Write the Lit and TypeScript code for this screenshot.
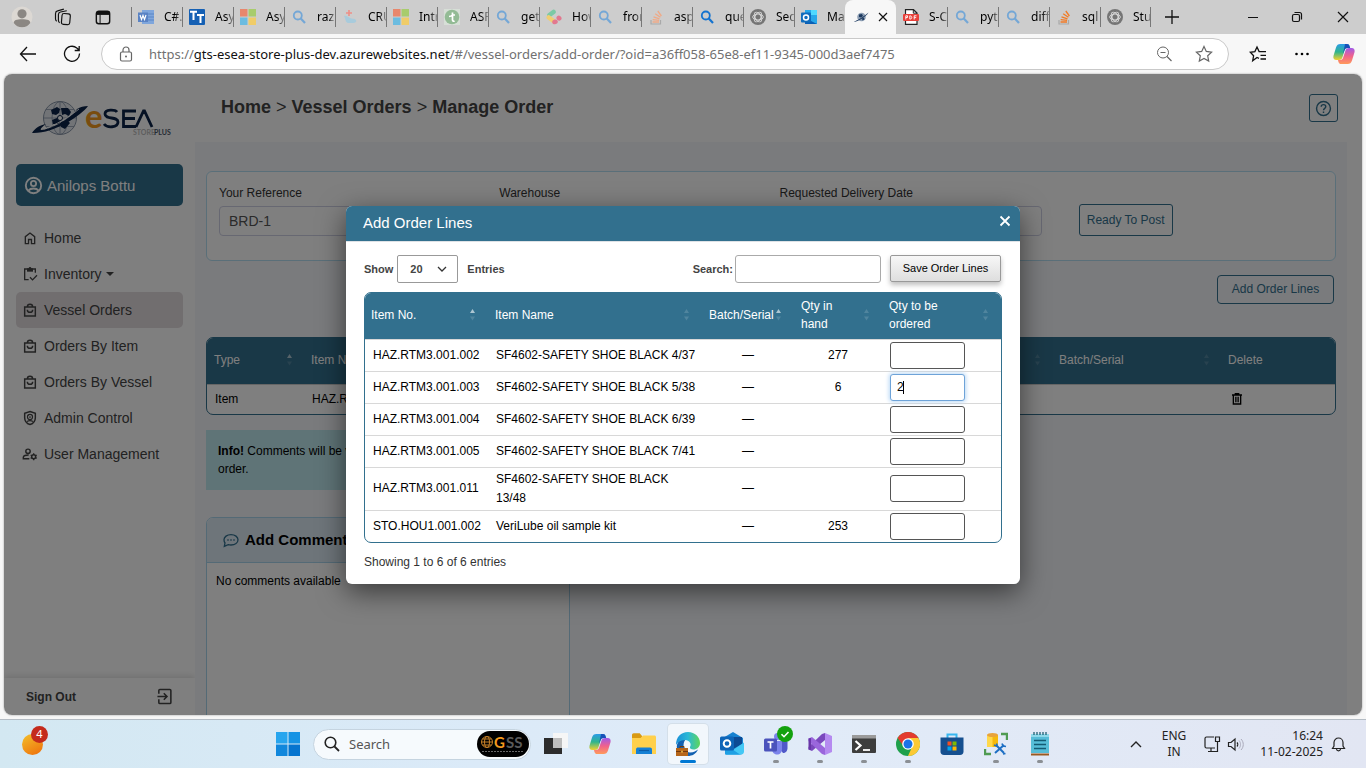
import { LitElement, html, css, svg, nothing, TemplateResult } from "lit";
import { customElement, state } from "lit/decorators.js";
import { classMap } from "lit/directives/class-map.js";

const icon = (size: number, body: TemplateResult, box = 24) =>
  html`<svg width=${size} height=${size} viewBox="0 0 ${box} ${box}" aria-hidden="true">${body}</svg>`;

/* ---------- favicons (16 box) ---------- */
const lens = (c: string) => svg`<circle cx="6.8" cy="6.5" r="4" fill="none" stroke=${c} stroke-width="1.8"/><path d="M9.8 9.6 14 14" stroke=${c} stroke-width="2.2"/>`;
const stack = (c: string) => svg`<path d="M3 11v4h9.500v-4" fill="none" stroke="#a9a9a9" stroke-width="1.200"/><path d="M4.500 13h6.500M4.700 10.600l6.400.8M5.500 7.800l6 2M7.200 4.700l5.200 3.600M9.800 2l3.600 5" stroke=${c} stroke-width="1.300"/>`;
const favs: Record<string, TemplateResult> = {
  word: svg`<rect x="4" y="1" width="12" height="14" fill="#7fa6dc"/><path d="M4 5h12M4 8h12M4 11h12" stroke="#5b86c6"/><rect y="3.500" width="10" height="9.500" fill="#5a83c4"/><path d="m2 6 1.500 4.500L5 6.500l1.500 4L8 6" fill="none" stroke="#fff" stroke-width="1.200"/>`,
  tt: svg`<rect width="16" height="16" rx="1" fill="#1560b4"/><path d="M1 2.800h7M4.500 3v8M8 6h7M11.500 6v8" stroke="#fff" stroke-width="2"/>`,
  ms: svg`<path fill="#e8876c" d="M0 0h7.500v7.500H0z"/><path fill="#a8cc6c" d="M8.500 0H16v7.500H8.500z"/><path fill="#6cbce0" d="M0 8.500h7.500V16H0z"/><path fill="#f0cc68" d="M8.500 8.500H16V16H8.500z"/>`,
  find: lens("#74a7d6"),
  findb: lens("#1473cf"),
  crud: svg`<path d="M7 1v6M4 4h6" stroke="#ef8f86" stroke-width="1.600"/><path d="M2 7c2-1 4 1 6 2s4 0 6 2c1 2-1 3-3 3H6C3 13 4 10 2 7z" fill="#a8cbdc"/>`,
  tt2: svg`<rect width="16" height="16" fill="#d7dfd7"/><circle cx="8" cy="8" r="7.300" fill="#93bb95"/><path d="M8.500 3.500v7.500c0 1.300 1.500 1.500 2 .8M5 7.500c2 0 3-1 3.500-1.500H11" fill="none" stroke="#fff" stroke-width="1.700"/>`,
  pills: svg`<g stroke-width="4.600" stroke-linecap="round"><path d="m3.500 6 4-3" stroke="#7cc9a5"/><path d="m2.800 8.500 4 3" stroke="#f0ce73"/><path d="m8.500 13 1-.2M12.800 9l.4.400" stroke="#e2788f"/></g>`,
  so: stack("#f0a986"),
  so2: stack("#f27a24"),
  ai: svg`<circle cx="8" cy="8" r="8" fill="#757575"/><g fill="none" stroke="#d8d8d8" stroke-width="1"><ellipse cx="8" cy="8" rx="5.300" ry="3"/><ellipse cx="8" cy="8" rx="5.300" ry="3" transform="rotate(60 8 8)"/><ellipse cx="8" cy="8" rx="5.300" ry="3" transform="rotate(120 8 8)"/></g>`,
  outlook: svg`<rect x="4" y="1" width="12" height="14" fill="#28a8ea"/><path d="M10 1h6v5h-6z" fill="#50d9ff"/><path d="m4 9 12 6H4z" fill="#0a5fb5"/><rect y="3.500" width="10" height="10" rx="1" fill="#0f6cbd"/><circle cx="5" cy="8.500" r="2.500" fill="none" stroke="#fff" stroke-width="1.500"/>`,
  pdf: svg`<path d="M2.500.7h8L14 4v11.300H2.500z" fill="#fff" stroke="#222" stroke-width="1.200"/><path d="M10.300.7v3.500H14" fill="none" stroke="#222"/><rect y="5" width="16" height="7" rx="1" fill="#e8403a"/><path d="M2.800 10.500V6.800h1.700v1.700H2.800M6.800 6.800v3.300c2.800 0 2.500-3.300 0-3.300M11.200 10.500V6.800h2.300M11.200 8.600h2" fill="none" stroke="#fff" stroke-width=".9"/>`,
  sea: svg`<circle cx="8.500" cy="8" r="4.300" fill="#8fa0b5"/><path d="M6 5.500 9 5l1 2-2 1.500-2-.5zM9 9.500l2-1 .5 2-2 1z" fill="#1d3a60"/><path d="M.5 13C3 12 12 7 15.500 3.500 13 8 5 12.500.5 13z" fill="#1d3a60"/>`,
};

/* ---------- navigation icons (24 box) ---------- */
const bag = svg`<path d="M4 7.500h16v13.500H4zM8 7.500a4 4 0 0 1 8 0M8 11.500a4 4 0 0 0 8 0" fill="none" stroke="currentColor" stroke-width="2.200"/>`;
const navIcons: Record<string, TemplateResult> = {
  home: svg`<path d="M5 20.500V10l7-5.500 7 5.500v10.500h-4.800v-6.300H9.800v6.300z" fill="none" stroke="currentColor" stroke-width="2"/>`,
  inventory: svg`<path d="M10 20.500H4V4.500h16V10" fill="none" stroke="currentColor" stroke-width="2"/><path d="M7.500 3.500h9v5h-9z" fill="currentColor"/><circle cx="12" cy="3.500" r="2" fill="currentColor"/><path d="m12 17 3.800 3.800L22.500 14" fill="none" stroke="currentColor" stroke-width="2"/>`,
  bag,
  shield: svg`<path d="M12 2.200 20 5v6.500c0 4.800-3.400 8.800-8 10.300-4.600-1.500-8-5.500-8-10.300V5z" fill="none" stroke="currentColor" stroke-width="2.200"/><circle cx="12" cy="10.500" r="3.800" fill="none" stroke="currentColor" stroke-width="1.800"/><circle cx="12" cy="10.500" r="1.300" fill="currentColor"/><path d="M7.500 17.300c2.500-1.500 6.500-1.500 9 0" fill="none" stroke="currentColor" stroke-width="1.800"/>`,
  users: svg`<circle cx="9" cy="8" r="3.300" fill="none" stroke="currentColor" stroke-width="2.200"/><path d="M11 19H2v-2.300c0-2 3.500-3.300 8-3.200" fill="none" stroke="currentColor" stroke-width="2.200"/><circle cx="17.500" cy="16" r="3" fill="none" stroke="currentColor" stroke-width="2.200"/><path d="M17.500 10.800v2.500M17.500 18.700v2.500M13 13.500l2.100 1.200M19.900 17.300l2.100 1.200M13 18.500l2.100-1.200M19.900 14.700l2.100-1.200" stroke="currentColor" stroke-width="2"/>`,
};

/* ---------- taskbar icons (24 box) ---------- */
const copilot = svg`<defs><linearGradient id="ca" x1="0" y1="0" x2="0" y2="1"><stop offset="0" stop-color="#2a9be8"/><stop offset=".5" stop-color="#2fb58c"/><stop offset="1" stop-color="#f3d02f"/></linearGradient><linearGradient id="cb" x1="0" y1="0" x2="0" y2="1"><stop offset="0" stop-color="#a05ae8"/><stop offset=".5" stop-color="#f0628c"/><stop offset="1" stop-color="#ff9a5a"/></linearGradient></defs>
<path d="M8.500 2h6.300c1.600 0 2.300.8 2.800 2.300L18 6h-2.500c-1.600 0-2.400.7-2.900 2.200l-2 6.500C10 16.800 9 18 7 18H4.500C1.800 18 .9 16 1.500 13.700L4 5.500C4.800 3 6 2 8.500 2z" fill="url(#ca)"/>
<path d="M13 2h2c1.500 0 2.200.9 2.600 2.300L18.200 6h-2.700c-1.500 0-2.400.7-2.900 2.200L11 12z" fill="#1750b8"/>
<path d="M15.500 22H9.200c-1.600 0-2.300-.8-2.800-2.300L6 18h2c1.600 0 2.600-.7 3.100-2.200l2.300-7C14 6.800 15 6 17 6h2.500c2.700 0 3.600 2 3 4.300L20 18.500c-.8 2.500-2 3.500-4.500 3.500z" fill="url(#cb)"/>`;
const apps: { name: string; art: TemplateResult; run?: string; badge?: boolean }[] = [
  { name: "Task View", art: svg`<path d="M0 6h18v16H0z" fill="#2c2c2c"/><path d="M9 1h15v15H9z" fill="#f6f6f6"/><path d="M9 6h9v10H9z" fill="#bdbdbd"/>` },
  { name: "Copilot", art: copilot },
  { name: "File Explorer", art: svg`<path d="M0 3c0-1 .7-1.700 1.700-1.700h6L10 4v4H0z" fill="#d99a13"/><path d="M0 6h8.500L11 3.500h11.500c.8 0 1.500.7 1.500 1.500v17H0z" fill="#ffd04c"/><path d="M4 22v-4.500C4 16 5 15.500 6 15.500h12c1.200 0 2 .7 2 2V22z" fill="#1580d4"/><path d="M7 18.500h10" stroke="#0b5ca8" stroke-width="1.200"/>` },
  { name: "Edge", run: "active", art: svg`<defs><linearGradient id="eg" x1="0" x2="1"><stop offset="0" stop-color="#1a8fd8"/><stop offset=".5" stop-color="#2bb9d6"/><stop offset="1" stop-color="#5ed65a"/></linearGradient></defs><path d="M1 17C0 10 4 7 9.500 7.500 6 12 7 20 14 20.500c4 0 6-1.500 8-3C20 22 16 24 12 24 6 24 2 22 1 17z" fill="#1260b0"/><path d="M0 13C0 5 5 0 12 0s12 5 12 11c0 4-3 6.500-6.500 6.500-2.500 0-4-1-3.500-2.500 2-3-.5-7-5-7C4 8 1 11 0 13z" fill="url(#eg)"/><path d="M0 16h12v8H0z" fill="#b5651a"/><path d="M0 19.500h12" stroke="#70380b"/><path d="M4 16v-1.500h4V16" fill="none" stroke="#70380b"/><path d="M5.300 18.800h1.400v1.800H5.300z" fill="#ffd35a"/>` },
  { name: "Outlook", art: svg`<path d="M3 6 13 0l10 6v14c0 1.500-1 2.500-2.500 2.500H6z" fill="#1681d0"/><path d="M13 5h9v7l-9 5z" fill="#0c4a94"/><path d="m6 22.500 18-12v9c0 2-1.300 3-3 3z" fill="#44c8f5"/><path d="M5 9v13.500h15L9 15z" fill="#1fa0e4"/><rect x="0" y="4.500" width="14" height="14" rx="1.500" fill="#0e65b8"/><circle cx="7" cy="11.500" r="3.300" fill="none" stroke="#fff" stroke-width="2"/>` },
  { name: "Teams", run: "dot", badge: true, art: svg`<circle cx="13.500" cy="4.500" r="3.500" fill="#7b83eb"/><path d="M9 9h13c1 0 1.500.6 1.500 1.500V16c0 3-2 5-4.500 5z" fill="#5059c9"/><path d="M8 9h10v8c0 3.500-2 5.500-5 5.500S8 20 8 17z" fill="#7b83eb"/><rect y="6.500" width="13" height="13" rx="1.500" fill="#4b53bc"/><path d="M3.500 10h6M6.500 10v6.500" stroke="#fff" stroke-width="1.700"/>` },
  { name: "Visual Studio", run: "dot", art: svg`<path d="M17 1 24 4v16l-7 3z" fill="#b58af0"/><path d="M17 1v7L4 19l-3.500-1.500V15L14 2z" fill="#7a48bd"/><path d="M17 23v-7L4 5 .5 6.500V9L14 22z" fill="#9a66dc"/><path d="M.5 6.500 3 6v12l-2.500-.5z" fill="#6936a8"/>` },
  { name: "Terminal", run: "dot", art: svg`<rect y="3" width="24" height="18" rx="1" fill="#3d3d3d"/><path d="M0 3h24v3.500H0z" fill="#9b9b9b"/><path d="m3.500 9 5 4.500-5 4.500" fill="none" stroke="#fff" stroke-width="2.200"/><path d="M11 18h7" stroke="#fff" stroke-width="1.800"/>` },
  { name: "Chrome", run: "dot", art: svg`<circle cx="12" cy="12" r="12" fill="#1fa04c"/><path d="M1.600 6A12 12 0 0 1 22.400 6L12 7 7.700 14.500z" fill="#e33b2e"/><path d="M22.400 6A12 12 0 0 1 12 24l4.300-9.500L12 6z" fill="#fcc934"/><circle cx="12" cy="12" r="5.800" fill="#fff"/><circle cx="12" cy="12" r="4.500" fill="#1a73e8"/>` },
  { name: "Store", art: svg`<path d="M7.500 6V2.500h9V6" fill="none" stroke="#37b6ef" stroke-width="2"/><path d="M.5 5.500h23v14c0 2-1.200 3.500-3.500 3.500H4C1.700 23 .5 21.500.5 19.500z" fill="#154f8f"/><path fill="#f25022" d="M7.500 9.500h4v4h-4z"/><path fill="#7fba00" d="M12.500 9.500h4v4h-4z"/><path fill="#00a4ef" d="M7.500 14.500h4v4h-4z"/><path fill="#ffb900" d="M12.500 14.500h4v4h-4z"/>` },
  { name: "SQL Server Management Studio", run: "dot", art: svg`<path d="M3 3h11v12H3z" fill="#ffd84a"/><path d="M8.500 3H14v12H8.500z" fill="#f5b90c"/><ellipse cx="8.500" cy="3" rx="5.500" ry="2" fill="#e8a33c"/><path d="M17 2h6v6M1 17v5h6" fill="none" stroke="#4f9b52" stroke-width="2.400"/><path d="m12 13 8 8M20 13l-9 8" stroke="#1d6fc4" stroke-width="2"/><path d="m18 11.500 1 2.500 3 .5M10 13l2.500 1 .5-2.500M19 22l2.500-.5" fill="none" stroke="#1d6fc4" stroke-width="1.600"/>` },
  { name: "Notepad", run: "dot", art: svg`<path d="M3 2h18v19H3z" fill="#56bdd8"/><path d="M3 2h18v3H3z" fill="#8fd9ea"/><path d="M6 0v3M9 0v3M12 0v3M15 0v3M18 0v3" stroke="#12566b" stroke-width="1.200"/><path d="M6 8.500h12M6 12.500h12M6 16.500h12" stroke="#135a73" stroke-width="1.600"/><path d="M3 22.500h18" stroke="#9a5a22" stroke-width="2"/>` },
];

const tabs: [string, string][] = [
  ["word", "C#."], ["tt", "Asy"], ["ms", "Asy"], ["find", "raz"], ["crud", "CRU"], ["ms", "Intr"], ["tt2", "ASP"],
  ["find", "get"], ["pills", "How"], ["find", "fron"], ["so", "asp"], ["findb", "que"], ["ai", "Sec"], ["outlook", "Ma"],
];
const tabsAfter: [string, string][] = [["pdf", "S-C"], ["find", "pyt"], ["find", "diff"], ["so2", "sql"], ["ai", "Stu"]];

const sortMark = (up = false) => html`<svg class="sort" width="5" height="12" viewBox="0 0 5 12" aria-hidden="true">
  <path d="M0 4 2.500 0 5 4z" fill="#fff" opacity=${up ? 0.6 : 0.15}></path><path d="M0 7.500h5L2.500 11.500z" fill="#fff" opacity=".15"></path></svg>`;

const base = css`
  :host { display: block; }
  * { box-sizing: border-box; }
  button, input, select { font: inherit; color: inherit; margin: 0; }
  button { background: none; border: 0; padding: 0; display: flex; align-items: center; justify-content: center; }
  svg { display: block; flex: none; }
  a { color: inherit; text-decoration: none; }
`;

@customElement("browser-chrome")
class BrowserChrome extends LitElement {
  static styles = [base, css`
    :host { font-family: "Noto Sans", sans-serif; background: #f7f7f7; flex: none; }
    .tabs { display: flex; height: 34px; background: #cdcdcd; align-items: center; }
    .lead { display: flex; width: 131px; padding-left: 11px; gap: 20px; align-items: center; }
    .tab { display: flex; align-items: center; width: 51px; height: 20px; padding-left: 6px; gap: 10px; border-left: 1px solid #777; font-size: 12px; min-width: 0; }
    .label { flex: 1; overflow: hidden; white-space: nowrap; line-height: 20px; mask-image: linear-gradient(to right, #000 60%, rgba(0,0,0,.3)); }
    .on { width: 51px; height: 34px; background: #f7f7f7; border-radius: 8px 8px 0 0; display: flex; align-items: center; justify-content: center; gap: 9px; }
    .last { border-right: 1px solid #777; }
    .after { border-left-color: transparent; }
    .plus { margin-left: 14px; }
    .win { margin-left: auto; display: flex; gap: 30px; padding-right: 15px; }
    .bar { display: flex; align-items: center; height: 40px; padding: 0 10px 0 19px; }
    .back { margin-right: 26px; }
    .address { flex: 1; display: flex; align-items: center; height: 32px; margin: 0 20px; padding: 0 15px 0 16px; border: 1px solid #c9c9c9; border-radius: 16px; background: #fff; color: #717171; font-size: 13px; }
    .url { margin-left: 15px; white-space: nowrap; flex: 1; }
    .host { color: #111; }
    .zoom { margin-right: 22px; }
    .more { margin: 0 22px 0 27px; }
  `];
  tab([f, t]: [string, string], cls = "") {
    return html`<div class="tab ${cls}">${icon(16, favs[f], 16)}<span class="label">${t}</span></div>`;
  }
  render() {
    return html`
      <div class="tabs">
        <div class="lead">
          ${icon(22, svg`<circle cx="12" cy="12" r="11.500" fill="#dcd8d3"/><circle cx="12" cy="8.500" r="5" fill="#8b8783"/><path d="M3 18.500C3 15.500 6 14.500 12 14.500s9 1 9 4c-2 3-5 4.800-9 4.800s-7-1.800-9-4.800z" fill="#8b8783"/>`)}
          ${icon(20, svg`<g fill="none" stroke="#111" stroke-width="1.400"><rect x="10.500" y="8" width="10" height="13" rx="2.500" transform="rotate(5 15 14)"/><path d="M8 19C6.500 18 6.500 17 6.500 16V9c0-2 1-2.700 2.500-3l7.500-1.500M4.500 17C3 16 3 15 3 14V8c0-2 1-3 2.500-3.300L13 2.500"/></g>`)}
          ${icon(20, svg`<rect x="4" y="5" width="16" height="15" rx="3" fill="none" stroke="#111" stroke-width="1.700"/><path d="M4 5.500h16v4H4z" fill="#111"/><path d="M8.500 9v11" stroke="#111" stroke-width="1.200"/>`)}
        </div>
        ${tabs.map(t => this.tab(t))}
        <div class="on">${icon(16, favs.sea, 16)}<button aria-label="Close tab">${icon(10, svg`<path d="m1 1 8 8M9 1 1 9" stroke="#111" stroke-width="1.200"/>`, 10)}</button></div>
        ${tabsAfter.map((t, i) => this.tab(t, i === 0 ? "after" : i === 4 ? "last" : ""))}
        <button class="plus" aria-label="New tab">${icon(14, svg`<path d="M7 0v14M0 7h14" stroke="#111" stroke-width="1.300"/>`, 14)}</button>
        <div class="win">
          <button aria-label="Minimize">${icon(12, svg`<path d="M1 6.500h10" stroke="#111"/>`, 12)}</button>
          <button aria-label="Restore">${icon(16, svg`<rect x="3.500" y="5.500" width="7" height="7" rx="1.500" fill="none" stroke="#111" stroke-width="1.200"/><path d="M5.500 3.500h5a2 2 0 0 1 2 2v5" fill="none" stroke="#111" stroke-width="1.200"/>`, 16)}</button>
          <button aria-label="Close">${icon(16, svg`<path d="m3 3 10 10M13 3 3 13" stroke="#111" stroke-width="1.200"/>`, 16)}</button>
        </div>
      </div>
      <div class="bar">
        <button class="back" aria-label="Back">${icon(18, svg`<path d="M17 9H2M8 2 1.500 9 8 16" fill="none" stroke="#111" stroke-width="1.300"/>`, 18)}</button>
        <button aria-label="Reload">${icon(18, svg`<path d="M16.500 8.500A7.500 7.500 0 1 1 13.800 3l2.200 2M16.200 1v4.500H11.700" fill="none" stroke="#111" stroke-width="1.300"/>`, 18)}</button>
        <div class="address">
          ${icon(16, svg`<rect x="2.500" y="6" width="11" height="9" rx="1.500" fill="none" stroke="#666" stroke-width="1.200"/><path d="M5 6V4a3 3 0 0 1 6 0v2" fill="none" stroke="#666" stroke-width="1.200"/><circle cx="8" cy="10.500" r="1" fill="#666"/>`, 16)}
          <div class="url" role="textbox" aria-label="Address">https://<span class="host">gts-esea-store-plus-dev.azurewebsites.net</span>/#/vessel-orders/add-order/?oid=a36ff058-65e8-ef11-9345-000d3aef7475</div>
          <button class="zoom" aria-label="Zoom out">${icon(18, svg`<circle cx="8" cy="7.500" r="5.500" fill="none" stroke="#666"/><path d="M5.500 7.500h5M12 11.500l4.500 4.500" stroke="#666" stroke-width="1.200"/>`, 18)}</button>
          <button aria-label="Favorite">${icon(18, svg`<path d="m9 1.500 2.300 4.900 5.300.7-3.900 3.700 1 5.300L9 13.500l-4.700 2.600 1-5.300L1.400 7.100l5.300-.7z" fill="none" stroke="#666" stroke-width="1.200"/>`, 18)}</button>
        </div>
        <button aria-label="Favorites">${icon(18, svg`<path d="M10 13.300 8 12.500l-4.300 3.300.9-5L1.300 7.300l4.600-.7L8 2l2.100 4.600H17M11.500 10.300H17M11.500 14H17" fill="none" stroke="#111" stroke-width="1.300"/>`, 18)}</button>
        <button class="more" aria-label="More">${icon(16, svg`<circle cx="2.500" cy="8" r="1.300"/><circle cx="8" cy="8" r="1.300"/><circle cx="13.500" cy="8" r="1.300"/>`, 16)}</button>
        <button aria-label="Copilot">${icon(24, copilot)}</button>
      </div>`;
  }
}

@customElement("side-nav")
class SideNav extends LitElement {
  static styles = [base, css`
    :host { display: flex; flex-direction: column; width: 191px; flex: none; background: #fff; color: #444; }
    .logo { padding: 25px 0 0 27px; }
    .user { display: flex; align-items: center; justify-content: flex-start; gap: 4px; height: 42px; margin: 24px 12px 14px; padding: 0 8px; border-radius: 5px; background: #32708e; color: #fff; font-size: 15px; }
    nav { display: flex; flex-direction: column; padding: 0 12px; }
    .item { display: flex; align-items: center; gap: 6px; height: 36px; padding-left: 6px; border-radius: 5px; font-size: 14px; }
    .on { background: #e3dcdf; }
    .out { display: flex; justify-content: space-between; align-items: center; height: 37px; margin-top: auto; padding: 0 22px; font-size: 12px; font-weight: bold; box-shadow: 0 -2px 6px rgba(0,0,0,.12); }
    .e { font: bold 33px Lato, sans-serif; }
    .plus { font: bold 7px Lato, sans-serif; }
    .caret { border: 4px solid transparent; border-top-color: currentColor; border-bottom: 0; margin-left: -2px; }
  `];
  render() {
    const items: [string, string][] = [["home", "Home"], ["inventory", "Inventory"], ["bag", "Vessel Orders"], ["bag", "Orders By Item"], ["bag", "Orders By Vessel"], ["shield", "Admin Control"], ["users", "User Management"]];
    return html`
      <div class="logo">
        <svg width="144" height="41" viewBox="0 0 144 41" role="img" aria-label="eSEA Store Plus">
          <circle cx="29" cy="19" r="16.500" fill="#e4e8ee" stroke="#8996a8" stroke-width="1"/>
          <g fill="none" stroke="#8996a8" stroke-width=".8"><ellipse cx="29" cy="19" rx="8" ry="16.500"/><path d="M12.500 19h33M29 2.500v33M15 10.500h28M15 27.500h28"/></g>
          <path d="M20 11l6-3 3 2-1 4-3 2-4-1zM30 9l7 0 3 4-2 4-4-2-3 1zM21 21l5-2 4 3-3 3-5 0zM30 23l6-2 3 3-5 6-4-2z" fill="#0b2348"/>
          <path d="M1 34C4 29 9 26 15 25 11 28 9 30 10 31 22 30 40 19 46 10c3-2 7-3 11-3C50 17 22 35 1 34z" fill="#0b2348"/>
          <path d="M13 30C25 26 38 18 48 10" stroke="#fff" stroke-width=".9" fill="none"/>
          <circle cx="29" cy="19" r="2.500" fill="#fff" stroke="#0b2348"/>
          <text x="54" y="29" class="e" fill="#f3981c">e</text>
          <g fill="none" stroke="#0b2348" stroke-width="2.800"><path d="M86 13c-2-2.500-12-3-12 2 0 6 13 2 13 8 0 6-11 6-14 2M105 12H92.500v15.500H105M92.500 19.500H104M105 28l7.500-16h1L121 28"/></g>
          <text x="102" y="36" class="plus" fill="#bbb">STORE</text>
          <text x="123" y="36" class="plus" fill="#4a5568">PLUS</text>
        </svg>
      </div>
      <button class="user">
        ${icon(19, svg`<circle cx="12" cy="12" r="9.700" fill="none" stroke="currentColor" stroke-width="2.400"/><circle cx="12" cy="9.500" r="3.300" fill="none" stroke="currentColor" stroke-width="2.300"/><path d="M5.500 18.500c3-3.500 10-3.500 13 0" fill="none" stroke="currentColor" stroke-width="2.400"/>`)}
        Anilops Bottu</button>
      <nav>${items.map(([i, t]) => html`<a href="#" class=${classMap({ item: true, on: t === "Vessel Orders" })}>${icon(16, navIcons[i])}${t}${t === "Inventory" ? html`<span class="caret"></span>` : nothing}</a>`)}</nav>
      <a class="out" href="#">Sign Out ${icon(17, svg`<path d="M4 8V3.500C4 2.500 4.500 2 5.500 2h14c1 0 1.500.5 1.500 1.500v17c0 1-.5 1.500-1.500 1.500h-14c-1 0-1.500-.5-1.500-1.500V16M2 12h13M11 7.500l4.500 4.500-4.500 4.500" fill="none" stroke="currentColor" stroke-width="2.200"/>`)}</a>`;
  }
}

@customElement("order-page")
class OrderPage extends LitElement {
  static styles = [base, css`
    :host { flex: 1; min-width: 0; padding-right: 15px; color: #000; font-size: 12px; line-height: 18px; background: #fff; }
    header { display: flex; justify-content: space-between; align-items: center; height: 68px; padding: 0 9px 0 26px; }
    h1 { margin: 0; padding-bottom: 2px; font-size: 18px; line-height: 24px; color: #444; font-weight: normal; }
    .help { width: 29px; height: 28px; border: 1px solid #32708e; border-radius: 3px; color: #32708e; }
    .content { padding: 29px 11px 0; background: #f4f6fa; min-height: 100%; }
    .form { display: grid; grid-template-columns: 280fr 280fr 280fr 275fr; padding: 12px 0 24px 12px; border: 1px solid #b5dff3; border-radius: 6px; background: #fff; color: #333; }
    .field { display: grid; gap: 4px; padding-right: 18px; }
    .field input { height: 30px; width: 100%; border: 1px solid #ced0e4; border-radius: 4px; padding: 0 9px; font-size: 14px; color: #555; background: #fff; }
    .post { justify-self: start; align-self: end; margin-left: 19px; height: 32px; padding: 0 7px; border: 1px solid #32708e; border-radius: 3px; color: #32708e; }
    .tools { display: flex; justify-content: flex-end; padding: 14px 2px 33px; }
    .add { height: 29px; width: 117px; padding-bottom: 2px; border: 1px solid #32708e; border-radius: 4px; color: #32708e; }
    table { width: 100%; table-layout: fixed; border: 1px solid #32708e; border-radius: 7px; border-spacing: 0; overflow: hidden; background: #fff; }
    th { height: 46px; padding: 0 12px 2px 7px; background: #32708e; color: #fff; font-weight: normal; text-align: left; }
    .head { display: flex; justify-content: space-between; align-items: center; }
    td { height: 30px; padding: 0 8px 2px; border-top: 1px solid #ccc; }
    .type { width: 97px; } .no { width: 140px; } .qty { width: 140px; } .batch { width: 169px; } .del { width: 114px; }
    .info { width: 364px; margin: 15px 0 27px; padding: 12px; background: #bfe8ee; color: #000; }
    .comments { width: 364px; height: 240px; border: 1px solid #a9d5ec; border-radius: 7px 7px 0 0; background: #fff; }
    h2 { display: flex; align-items: center; gap: 6px; height: 45px; margin: 0; padding-left: 16px; background: #dceaf5; border-bottom: 1px solid #a9d5ec; border-radius: 6px 6px 0 0; font-size: 15px; }
    h2 svg { color: #32708e; }
    p { margin: 9px; }
  `];
  render() {
    const th = (cls: string, t: string, up = false, sort = true) => html`<th class=${cls}><div class="head">${t}${sort ? sortMark(up) : nothing}</div></th>`;
    return html`
      <header>
        <h1><b>Home</b> &gt; <b>Vessel Orders</b> &gt; <b>Manage Order</b></h1>
        <button class="help" aria-label="Help">${icon(17, svg`<circle cx="12" cy="12" r="9.800" fill="none" stroke="currentColor" stroke-width="2"/><path d="M8.800 9.500c0-4 6.400-4 6.400 0 0 2.300-3.200 2.300-3.200 5M12 16.200v2" fill="none" stroke="currentColor" stroke-width="2"/>`)}</button>
      </header>
      <div class="content">
        <div class="form">
          <label class="field">Your Reference<input .value=${"BRD-1"}></label>
          <label class="field">Warehouse<input></label>
          <label class="field">Requested Delivery Date<input></label>
          <button class="post">Ready To Post</button>
        </div>
        <div class="tools"><button class="add">Add Order Lines</button></div>
        <table>
          <thead><tr>${th("type", "Type", true)}${th("no", "Item No.")}${th("", "Item Name")}${th("qty", "Quantity")}${th("batch", "Batch/Serial")}${th("del", "Delete", false, false)}</tr></thead>
          <tbody><tr><td>Item</td><td>HAZ.RTM3.001.001</td><td></td><td></td><td></td>
            <td><button aria-label="Delete line">${icon(16, svg`<path d="M6.500 7v12.500h11V7M4.500 6h15M9.500 5.500V4h5v1.500M10.300 8.500V17M13.700 8.500V17" fill="none" stroke="#000" stroke-width="2"/>`)}</button></td></tr></tbody>
        </table>
        <div class="info"><b>Info!</b> Comments will be visible to everyone who can open the order.</div>
        <section class="comments">
          <h2>${icon(16, svg`<path d="M12 4c6 0 10.500 3.300 10.500 7.800s-4.500 7.700-10.500 7.700c-1.500 0-3-.2-4.200-.6L2 21.500l1-5C2 15.200 1.500 13.500 1.500 11.800 1.500 7.300 6 4 12 4z" fill="none" stroke="currentColor" stroke-width="2"/><path d="M6.500 12h2M11 12h2M15.500 12h2" stroke="currentColor" stroke-width="2"/>`)}Add Comments</h2>
          <p>No comments available</p>
        </section>
      </div>`;
  }
}

@customElement("order-lines-dialog")
class OrderLinesDialog extends LitElement {
  @state() rows: [string, string, string, string][] = [
    ["HAZ.RTM3.001.002", "SF4602-SAFETY SHOE BLACK 4/37", "277", ""],
    ["HAZ.RTM3.001.003", "SF4602-SAFETY SHOE BLACK 5/38", "6", "2"],
    ["HAZ.RTM3.001.004", "SF4602-SAFETY SHOE BLACK 6/39", "", ""],
    ["HAZ.RTM3.001.005", "SF4602-SAFETY SHOE BLACK 7/41", "", ""],
    ["HAZ.RTM3.001.011", "SF4602-SAFETY SHOE BLACK 13/48", "", ""],
    ["STO.HOU1.001.002", "VeriLube oil sample kit", "253", ""],
  ];
  static styles = [base, css`
    :host { width: 674px; background: #fff; border-radius: 6px; overflow: hidden; box-shadow: 0 8px 28px rgba(0,0,0,.55); font-size: 12px; line-height: 18px; color: #000; }
    header { display: flex; justify-content: space-between; height: 36px; padding: 0 9px 0 17px; align-items: center; background: #32708e; border-bottom: 1px solid #dee2e6; color: #fff; }
    h2 { margin: 0; font-size: 15px; font-weight: normal; }
    .close { align-self: start; padding-top: 9px; }
    .body { padding: 13px 18px; }
    .tools { display: flex; align-items: center; font-size: 11px; font-weight: bold; color: #444; margin-bottom: 9px; }
    .pick { display: grid; align-items: center; margin: 0 9px 0 4px; }
    .pick > * { grid-area: 1 / 1; }
    .pick svg { justify-self: end; margin-right: 11px; pointer-events: none; }
    select { appearance: none; width: 61px; height: 28px; padding: 0 12px; border: 1px solid #999; border-radius: 2px; background: #fff; }
    .find { display: flex; align-items: center; gap: 2px; margin-left: auto; }
    .find input { width: 146px; height: 28px; border: 1px solid #aaa; border-radius: 3px; padding: 0 8px; }
    .save { width: 111px; height: 27px; margin: 0 1px 0 9px; padding-bottom: 2px; border: 1px solid #999; border-radius: 2px; background: linear-gradient(#f7f7f7, #dedede); box-shadow: 0 3px 5px rgba(0,0,0,.25); color: #000; font-weight: normal; }
    table { width: 100%; table-layout: fixed; border: 1px solid #32708e; border-radius: 7px; border-spacing: 0; overflow: hidden; }
    th { height: 46px; padding: 0 13px 2px 7px; background: #32708e; color: #fff; font-weight: normal; text-align: left; white-space: nowrap; }
    th:first-child { padding-left: 6px; }
    .head { display: flex; align-items: center; justify-content: space-between; }
    .wrap { white-space: normal; max-width: 56px; }
    td { height: 32px; padding: 2px 4px 2px 8px; border-top: 1px solid #d8d8d8; line-height: 19px; }
    .mid { text-align: center; padding: 2px 8px; }
    .no { width: 123px; } .batch { width: 92px; } .hand { width: 88px; } .order { width: 119px; }
    .qty { display: grid; }
    .qty > * { grid-area: 1 / 1; }
    .qty input { width: 75px; height: 27px; border: 1px solid #555; border-radius: 3px; padding: 0 6px; outline: none; }
    .focus input { border-color: #6ea3d8; box-shadow: 0 0 4px 1px #b9d8f5; }
    .caret { width: 1px; height: 13px; margin-left: 13px; align-self: center; background: #000; }
    .count { margin: 10px 0 0; color: #333; }
  `];
  render() {
    const th = (cls: string, t: string, up = false, wrap = false) => html`<th class=${cls}><div class="head"><span class=${wrap ? "wrap" : ""}>${t}</span>${sortMark(up)}</div></th>`;
    return html`
      <header><h2>Add Order Lines</h2><button class="close" aria-label="Close">${icon(12, svg`<path d="m1.500 1.500 9 9M10.500 1.500l-9 9" stroke="#fff" stroke-width="1.800"/>`, 12)}</button></header>
      <div class="body">
        <div class="tools">
          <label for="len">Show</label>
          <span class="pick"><select id="len"><option>20</option></select>${icon(10, svg`<path d="m1 3 4 4 4-4" fill="none" stroke="#333" stroke-width="1.300"/>`, 10)}</span>
          <span>Entries</span>
          <label class="find">Search:<input type="text"></label>
          <button class="save">Save Order Lines</button>
        </div>
        <table>
          <thead><tr>${th("no", "Item No.", true)}${th("", "Item Name")}${th("batch", "Batch/Serial", true)}${th("hand", "Qty in hand", false, true)}${th("order", "Qty to be ordered", false, true)}</tr></thead>
          <tbody>${this.rows.map(([no, name, hand, qty]) => html`<tr>
            <td>${no}</td><td>${name}</td><td class="mid">—</td><td class="mid">${hand}</td>
            <td><span class=${classMap({ qty: true, focus: !!qty })}><input type="text" aria-label="Qty for ${no}" .value=${qty}>${qty ? html`<span class="caret"></span>` : nothing}</span></td>
          </tr>`)}</tbody>
        </table>
        <p class="count">Showing 1 to 6 of 6 entries</p>
      </div>`;
  }
}

@customElement("task-bar")
class TaskBar extends LitElement {
  static styles = [base, css`
    :host { display: flex; align-items: center; height: 48px; flex: none; border-top: 1px solid #b4bcc4; background: linear-gradient(90deg, #d3e8f2, #dbeaf8 35%, #e1ebf8 60%, #e2e6f3); font-family: "Noto Sans", sans-serif; color: #222; font-size: 12px; line-height: 16px; }
    .left { width: 276px; padding-left: 22px; }
    .sun { position: relative; width: 21px; height: 21px; border-radius: 50%; background: linear-gradient(150deg, #f3c12c, #ee6c0a); }
    .badge { position: absolute; left: 9px; top: -8px; width: 17px; height: 17px; border-radius: 50%; background: #c42b1c; color: #fff; text-align: center; font-size: 11px; }
    .search { display: flex; align-items: center; width: 218px; height: 31px; margin: 0 5px 0 13px; padding: 0 1px 0 10px; border-radius: 16px; border: 1px solid #c5d4e0; background: #f6fafd; gap: 9px; }
    .search input { flex: 1; min-width: 0; border: 0; background: none; outline: 0; padding: 0; font-size: 13px; }
    .search input::placeholder { color: #555; opacity: 1; }
    .apps { display: flex; gap: 4px; }
    .app { position: relative; width: 40px; height: 40px; border-radius: 4px; }
    .active { background: #f2f7fc; box-shadow: 0 0 0 1px #d4dfe9; }
    .run { position: absolute; bottom: 1px; left: 17px; width: 6px; height: 3px; border-radius: 2px; background: #8b8f94; }
    .active .run { left: 12px; width: 16px; background: #0078d4; }
    .ok { position: absolute; right: 3px; top: 2px; }
    .tray { display: flex; align-items: center; margin-left: auto; padding-right: 20px; }
    .lang { text-align: center; margin: 0 17px 0 20px; }
    .time { text-align: right; margin: 0 8px 0 16px; }
    .gss { font: bold 15px Lato, sans-serif; }
    .vol { margin-left: 6px; }
  `];
  render() {
    return html`
      <div class="left"><div class="sun"><span class="badge">4</span></div></div>
      <button aria-label="Start">${icon(24, svg`<path fill="#27a5ee" d="M0 0h11.500v11.500H0z"/><path fill="#1593e4" d="M12.500 0H24v11.500H12.500z"/><path fill="#1187dc" d="M0 12.500h11.500V24H0z"/><path fill="#0574cf" d="M12.500 12.500H24V24H12.500z"/>`)}</button>
      <label class="search">${icon(16, svg`<circle cx="6.500" cy="6.500" r="5.300" fill="none" stroke="#222" stroke-width="1.600"/><path d="m10.500 10.500 4.500 4.500" stroke="#222" stroke-width="1.800"/>`, 16)}
        <input placeholder="Search" aria-label="Search Windows">
        <svg width="52" height="26" viewBox="0 0 52 26"><rect width="52" height="26" rx="13"/><g fill="none" stroke="#c58028" stroke-width="1"><circle cx="10" cy="11" r="5.500"/><ellipse cx="10" cy="11" rx="2.500" ry="5.500"/><path d="M4.500 11h11M5.500 8h9M5.500 14h9"/></g><text x="17" y="17" class="gss" fill="#f39a1e">G</text><text x="29" y="17" class="gss" fill="#5a5a5a">SS</text><path d="M5 20.500h42" stroke="#666" stroke-dasharray="2 1"/></svg>
      </label>
      <div class="apps">${apps.map(a => html`<button class=${classMap({ app: true, active: a.run === "active" })} aria-label=${a.name}>${icon(24, a.art)}
        ${a.run ? html`<span class="run"></span>` : nothing}
        ${a.badge ? html`<span class="ok">${icon(16, svg`<circle cx="8" cy="8" r="8" fill="#13a10e"/><path d="m4.500 8.200 2.500 2.500 4.500-4.700" fill="none" stroke="#fff" stroke-width="1.600"/>`, 16)}</span>` : nothing}</button>`)}</div>
      <div class="tray">
        ${icon(12, svg`<path d="m1 9 5-5 5 5" fill="none" stroke="#222" stroke-width="1.400"/>`, 12)}
        <span class="lang">ENG<br>IN</span>
        ${icon(18, svg`<path d="M11 2H3.500C2.500 2 2 2.500 2 3.500v8c0 1 .5 1.500 1.500 1.500H12M8 13v3.500M5 16.500h9.500V6.500M12.500 2h4v4.500h-4z" fill="none" stroke="#222" stroke-width="1.200"/>`, 18)}
        <span class="vol">${icon(17, svg`<path d="M1.500 6.500v4h2.500l4 3.500V3L4 6.500z" fill="none" stroke="#222" stroke-width="1.200"/><path d="M10 6.500c1 1 1 3 0 4" fill="none" stroke="#222" stroke-width="1.200"/><path d="M12 4.500c2 2.300 2 5.700 0 8M14 3c3 3 3 8 0 11" fill="none" stroke="#aab" stroke-width="1"/>`, 17)}</span>
        <span class="time">16:24<br>11-02-2025</span>
        ${icon(15, svg`<path d="M7.500 1a4.500 4.500 0 0 1 4.500 4.500V9l1.500 2.500h-12L3 9V5.500A4.500 4.500 0 0 1 7.500 1zM5.500 12c.3 2.500 3.700 2.500 4 0" fill="none" stroke="#222" stroke-width="1.200"/>`, 15)}
      </div>`;
  }
}

@customElement("app-root")
class AppRoot extends LitElement {
  static styles = css`
    :host { display: flex; flex-direction: column; height: 100vh; overflow: hidden; background: #f7f7f7; font-family: "Liberation Sans", Arial, sans-serif; }
    .view { position: relative; display: flex; flex: 1; min-height: 0; margin: 0 4px 4px; border-radius: 8px; overflow: hidden; box-shadow: 0 0 2px rgba(0,0,0,.4); }
    .shade { position: absolute; inset: 0; display: flex; align-items: center; justify-content: center; background: rgba(0,0,0,.5); }
  `;
  render() {
    return html`
      <browser-chrome></browser-chrome>
      <main class="view">
        <side-nav></side-nav>
        <order-page></order-page>
        <div class="shade"><order-lines-dialog role="dialog" aria-label="Add Order Lines"></order-lines-dialog></div>
      </main>
      <task-bar></task-bar>`;
  }
}
